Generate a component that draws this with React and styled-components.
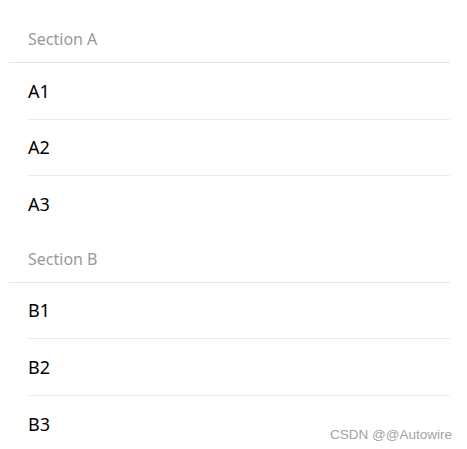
import React from "react";
import styled, { createGlobalStyle } from "styled-components";

const Global = createGlobalStyle`
  html, body { margin: 0; padding: 0; background: #fff; }
  body { font-family: "Noto Sans", "Open Sans", sans-serif; }
`;

const Page = styled.div`
  position: relative;
  width: 467px;
  height: 449px;
  overflow: hidden;
  padding: 13px 17px 0 9px;
  box-sizing: border-box;
`;

const Section = styled.section`
  display: flex;
  flex-direction: column;
`;

const Header = styled.div`
  height: 50px;
  box-sizing: border-box;
  padding: 14px 0 0 19px;
  border-bottom: 1px solid #e5e5e5;
  font-size: 16px;
  line-height: 24px;
  color: #999;
`;

const Row = styled.div`
  margin-left: 19px;
  height: 56.5px;
  box-sizing: border-box;
  display: flex;
  align-items: center;
  font-size: 18px;
  color: #000;
  border-bottom: ${(p) => (p.$last ? "none" : "1px solid #ececec")};
`;

const Watermark = styled.div`
  position: absolute;
  right: 15px;
  bottom: 7px;
  font-family: "Liberation Sans", Arial, sans-serif;
  font-size: 13.5px;
  color: #a3a3a3;
`;

const sections = [
  { title: "Section A", items: ["A1", "A2", "A3"] },
  { title: "Section B", items: ["B1", "B2", "B3"] },
];

export default function App() {
  return (
    <>
      <Global />
      <Page>
        {sections.map((s) => (
          <Section key={s.title}>
            <Header>{s.title}</Header>
            {s.items.map((it, i) => (
              <Row key={it} $last={i === s.items.length - 1}>
                {it}
              </Row>
            ))}
          </Section>
        ))}
        <Watermark>CSDN @@Autowire</Watermark>
      </Page>
    </>
  );
}
